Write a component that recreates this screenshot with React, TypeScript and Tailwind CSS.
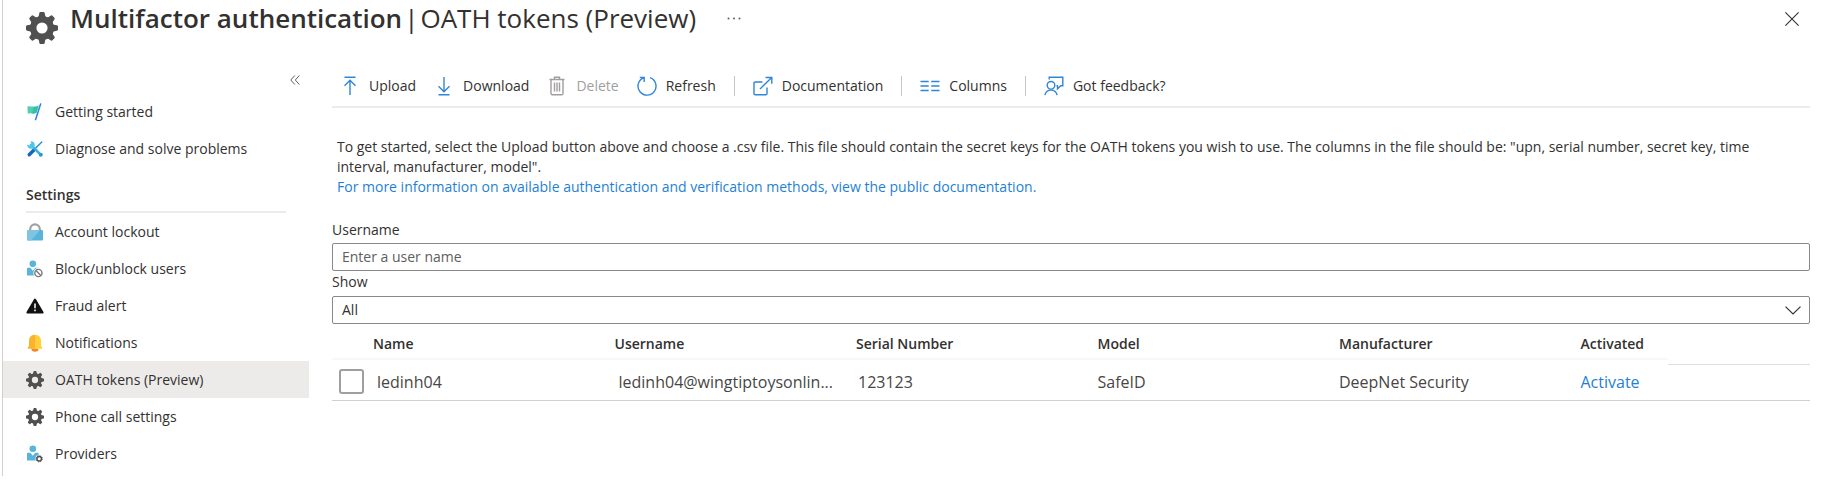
import type { ReactNode } from 'react';

const TOOTH_ANGLES = [0, 45, 90, 135, 180, 225, 270, 315];

function Gear({ className }: { className: string }) {
  return (
    <svg viewBox="0 0 32 32" className={className} aria-hidden="true">
      <circle cx="16" cy="16" r="8.8" fill="none" stroke="#505050" strokeWidth="6.4" />
      {TOOTH_ANGLES.map((angle) => (
        <path
          key={angle}
          d="M11.2 6.2 Q13 5 13.3 1.2 Q13.4 0 14.4 0 H17.6 Q18.6 0 18.7 1.2 Q19 5 20.8 6.2 V8 H11.2Z"
          fill="#505050"
          transform={`rotate(${angle} 16 16)`}
        />
      ))}
    </svg>
  );
}

function FlagIcon() {
  return (
    <svg viewBox="0 0 18 18" className="size-[18px]" aria-hidden="true">
      <path d="M1.4 3.8C4 2.4 7 5 12.6 2.4L10.6 9.6C7 12.2 5 9 1.8 10.8Z" fill="#4fd0b5" />
      <path d="M7.5 4C9.5 4 11 3.4 12.6 2.4L10.6 9.6C8.8 10.8 7.4 10.6 6.2 10.3Z" fill="#35bfa5" />
      <path d="M14.6 .9L9.6 16.6" stroke="#2f7fe0" strokeWidth="1.5" strokeLinecap="round" />
    </svg>
  );
}

function ToolsIcon() {
  return (
    <svg viewBox="0 0 18 18" className="size-[18px]" aria-hidden="true">
      <path d="M15.8 2L9 8.8" stroke="#2a93b8" strokeWidth="1.5" strokeLinecap="round" />
      <path d="M8.2 9.8L3.2 14.8" stroke="#1565c0" strokeWidth="3.4" strokeLinecap="round" />
      <path d="M5 5L14.8 14.8" stroke="#32b4dc" strokeWidth="2.6" strokeLinecap="round" />
      <path d="M4.6 1.2A3.8 3.8 0 1 1 1.2 4.6L3.6 5.6L5.4 3.8Z" fill="#4cc6ea" />
      <circle cx="14.8" cy="14.8" r="2" fill="#2a9cc4" />
    </svg>
  );
}

function LockIcon() {
  return (
    <svg viewBox="0 0 18 18" className="size-[18px]" aria-hidden="true">
      <path d="M4.2 8V6.2A4.8 4.8 0 0 1 13.8 6.2V8" fill="none" stroke="#a0a1a2" strokeWidth="2.2" />
      <rect x="1" y="7" width="16" height="10.5" rx="1" fill="#59b4d9" />
      <path d="M2 7H14L5 17.5H2A1 1 0 0 1 1 16.5V8A1 1 0 0 1 2 7Z" fill="#7fc4e2" />
    </svg>
  );
}

function Person() {
  return (
    <>
      <circle cx="6.8" cy="3.8" r="3.3" fill="#59b4d9" />
      <path
        d="M1.8 7.8H4.4L6.8 10.8L9.2 7.8H11.8Q12.6 7.8 12.6 8.6V15.5H1V8.6Q1 7.8 1.8 7.8Z"
        fill="#59b4d9"
      />
    </>
  );
}

function BlockUserIcon() {
  return (
    <svg viewBox="0 0 18 18" className="size-[18px]" aria-hidden="true">
      <Person />
      <circle cx="12.4" cy="13" r="5" fill="#fff" />
      <circle cx="12.4" cy="13" r="3.6" fill="#fff" stroke="#7a7a7a" strokeWidth="1.4" />
      <path d="M10 10.6L14.8 15.4" stroke="#7a7a7a" strokeWidth="1.4" />
    </svg>
  );
}

function ProviderIcon() {
  return (
    <svg viewBox="0 0 18 18" className="size-[18px]" aria-hidden="true">
      <Person />
      <circle cx="13.2" cy="13.8" r="3.9" fill="#fff" />
      <circle cx="13.2" cy="13.8" r="2.3" fill="#fff" stroke="#505050" strokeWidth="1.5" />
      <circle
        cx="13.2"
        cy="13.8"
        r="3.1"
        fill="none"
        stroke="#505050"
        strokeWidth="1"
        strokeDasharray="1.2 1.235"
      />
    </svg>
  );
}

function WarningIcon() {
  return (
    <svg viewBox="0 0 18 18" className="size-[18px]" aria-hidden="true">
      <path d="M9 2.6L16.6 15.6H1.4Z" fill="#111" stroke="#111" strokeWidth="2" strokeLinejoin="round" />
      <path d="M9 6.5V11.2M9 12.6V14.2" stroke="#fff" strokeWidth="1.5" />
    </svg>
  );
}

function BellIcon() {
  return (
    <svg viewBox="0 0 18 18" className="size-[18px]" aria-hidden="true">
      <path d="M5.4 14.5H12.6A3.6 3.2 0 0 1 5.4 14.5Z" fill="#ee8a1d" />
      <path d="M9 .8C5 .8 3 3.6 3 7V12L1.6 13.6Q1.4 14.8 2.4 14.8H9Z" fill="#fbb22c" />
      <path d="M9 .8C13 .8 15 3.6 15 7V12L16.4 13.6Q16.6 14.8 15.6 14.8H9Z" fill="#ffd03b" />
    </svg>
  );
}

function ToolIcon({ children, muted }: { children: ReactNode; muted?: boolean }) {
  return (
    <svg
      viewBox="0 0 20 20"
      className={muted ? 'size-5 text-[#a19f9d]' : 'size-5 text-[#2f86d8]'}
      fill="none"
      stroke="currentColor"
      strokeWidth="1.4"
      aria-hidden="true"
    >
      {children}
    </svg>
  );
}

function ToolButton({ icon, label, disabled }: { icon: ReactNode; label: string; disabled?: boolean }) {
  return (
    <button
      type="button"
      disabled={disabled}
      className="flex items-center gap-[9px] whitespace-nowrap text-[#323130] disabled:text-[#a19f9d]"
    >
      {icon}
      {label}
    </button>
  );
}

function Divider() {
  return <span className="h-5 w-px bg-[#c8c6c4]" />;
}

const introLinks = [
  { label: 'Getting started', icon: <FlagIcon /> },
  { label: 'Diagnose and solve problems', icon: <ToolsIcon /> },
];

const settingsLinks = [
  { label: 'Account lockout', icon: <LockIcon /> },
  { label: 'Block/unblock users', icon: <BlockUserIcon /> },
  { label: 'Fraud alert', icon: <WarningIcon /> },
  { label: 'Notifications', icon: <BellIcon /> },
  { label: 'OATH tokens (Preview)', icon: <Gear className="size-[18px]" />, selected: true },
  { label: 'Phone call settings', icon: <Gear className="size-[18px]" /> },
  { label: 'Providers', icon: <ProviderIcon /> },
];

function NavLink({ label, icon, selected }: { label: string; icon: ReactNode; selected?: boolean }) {
  return (
    <li>
      <a
        href="#"
        aria-current={selected ? 'page' : undefined}
        className={
          selected
            ? 'flex h-[37px] items-center gap-[11px] bg-[#edebe9] pl-[23px]'
            : 'flex h-[37px] items-center gap-[11px] pl-[23px]'
        }
      >
        {icon}
        {label}
      </a>
    </li>
  );
}

const headings = ['Name', 'Username', 'Serial Number', 'Model', 'Manufacturer', 'Activated'];

export default function App() {
  return (
    <div className="bg-white pl-[2px] font-['Open_Sans','Noto_Sans',sans-serif] text-sm text-[#323130]">
      <div className="border-l border-[#d2d0ce] pb-1">
        <header className="flex h-[62px] items-start pr-[29px] pl-[23px]">
          <Gear className="mt-3 size-8" />
          <h1 className="ml-3 flex gap-[2px] text-[26px] leading-9 whitespace-nowrap">
            <span className="font-semibold">Multifactor authentication</span>
            <span>|</span>
            <span>OATH tokens (Preview)</span>
          </h1>
          <button type="button" aria-label="More" className="mt-[17px] ml-[31px]">
            <svg viewBox="0 0 14 3" className="h-[3px] w-[14px]" fill="#605e5c">
              <circle cx="1.5" cy="1.5" r="1" />
              <circle cx="7" cy="1.5" r="1" />
              <circle cx="12.5" cy="1.5" r="1" />
            </svg>
          </button>
          <button type="button" aria-label="Close" className="mt-3 ml-auto">
            <svg viewBox="0 0 14 14" className="size-[14px]" stroke="#323130" strokeWidth="1.1">
              <path d="M.4 .4L13.6 13.6M13.6 .4L.4 13.6" />
            </svg>
          </button>
        </header>

        <div className="flex">
          <nav aria-label="Sections" className="w-[306px] shrink-0">
            <div className="flex h-[31px] items-center justify-end pt-[5px] pr-[9px]">
              <button type="button" aria-label="Collapse menu">
                <svg viewBox="0 0 10 10" className="size-[10px]" fill="none" stroke="#605e5c">
                  <path d="M4.8 .5L.8 5L4.8 9.5M9.3 .5L5.3 5L9.3 9.5" />
                </svg>
              </button>
            </div>
            <ul>
              {introLinks.map((link) => (
                <NavLink key={link.label} {...link} />
              ))}
            </ul>
            <h2 className="mr-[23px] ml-[23px] flex h-[46px] items-end border-b-2 border-[#edebe9] pb-[6px] font-semibold">
              Settings
            </h2>
            <ul>
              {settingsLinks.map((link) => (
                <NavLink key={link.label} {...link} />
              ))}
            </ul>
          </nav>

          <main className="min-w-0 flex-1 pr-[18px] pl-[23px]">
            <div className="flex h-[46px] items-center gap-[18px] border-b-2 border-[#edebe9] pt-1 pl-2">
              <ToolButton
                label="Upload"
                icon={
                  <ToolIcon>
                    <path d="M4.5 1.2H15.5M10 19V4M4.5 9.7L10 4.2L15.5 9.7" />
                  </ToolIcon>
                }
              />
              <ToolButton
                label="Download"
                icon={
                  <ToolIcon>
                    <path d="M4.5 18.8H15.5M10 1V16M4.5 10.3L10 15.8L15.5 10.3" />
                  </ToolIcon>
                }
              />
              <ToolButton
                label="Delete"
                disabled
                icon={
                  <ToolIcon muted>
                    <path d="M2.5 3.5H17.5M7.5 3.5V1.2H12.5V3.5M4 3.5V17.5Q4 18.8 5.3 18.8H14.7Q16 18.8 16 17.5V3.5M7.5 6.5V15.5M10 6.5V15.5M12.5 6.5V15.5" />
                  </ToolIcon>
                }
              />
              <ToolButton
                label="Refresh"
                icon={
                  <ToolIcon>
                    <path d="M13 1.6A9 9 0 1 1 6.5 1.8M2.8 1.4H7.2V6" />
                  </ToolIcon>
                }
              />
              <Divider />
              <ToolButton
                label="Documentation"
                icon={
                  <ToolIcon>
                    <path d="M9.5 6H2.2Q1 6 1 7.2V17.5Q1 18.7 2.2 18.7H12.8Q14 18.7 14 17.5V11.5M7 13L18.5 1.7M12.5 1.5H18.8V7.8" />
                  </ToolIcon>
                }
              />
              <Divider />
              <ToolButton
                label="Columns"
                icon={
                  <ToolIcon>
                    <path d="M.5 5.5H8.7M11.2 5.5H19.5M.5 10H8.7M11.2 10H19.5M.5 14.5H8.7M11.2 14.5H19.5" />
                  </ToolIcon>
                }
              />
              <Divider />
              <ToolButton
                label="Got feedback?"
                icon={
                  <ToolIcon>
                    <circle cx="7" cy="9.3" r="3.8" />
                    <path d="M.9 19.2A6.2 6.2 0 0 1 13.1 19.2M5.2 3.5V1.2H18.8V9.7H16.8L13.5 12.8V9.7H12.5" />
                  </ToolIcon>
                }
              />
            </div>

            <p className="mt-[29px] pr-5 pl-[5px] leading-5">
              To get started, select the Upload button above and choose a .csv file. This file should contain the secret
              keys for the OATH tokens you wish to use. The columns in the file should be: "upn, serial number, secret
              key, time interval, manufacturer, model".
              <br />
              <a href="#" className="text-[#1f7fd6]">
                For more information on available authentication and verification methods, view the public
                documentation.
              </a>
            </p>

            <form className="mt-[21px] flex flex-col">
              <label htmlFor="username" className="h-[25px] leading-6">
                Username
              </label>
              <input
                id="username"
                type="text"
                placeholder="Enter a user name"
                className="h-7 rounded-[2px] border border-[#8a8886] px-[9px] pb-[2px] placeholder:text-[#605e5c]"
              />
              <label htmlFor="show" className="h-[25px] leading-[22px]">
                Show
              </label>
              <div className="relative flex">
                <select
                  id="show"
                  className="h-7 w-full appearance-none rounded-[2px] border border-[#8a8886] bg-white px-[9px]"
                >
                  <option>All</option>
                </select>
                <svg
                  viewBox="0 0 16 9"
                  className="pointer-events-none absolute top-[10px] right-[9px] h-[9px] w-4"
                  fill="none"
                  stroke="#323130"
                  strokeWidth="1.2"
                  aria-hidden="true"
                >
                  <path d="M.5 .6L8 8L15.5 .6" />
                </svg>
              </div>
            </form>

            <table className="w-full table-fixed border-collapse text-left">
              <colgroup>
                <col className="w-[41px]" />
                <col className="w-[16.34%]" />
                <col className="w-[16.34%]" />
                <col className="w-[16.34%]" />
                <col className="w-[16.34%]" />
                <col className="w-[16.34%]" />
                <col className="w-[87px]" />
                <col />
              </colgroup>
              <thead>
                <tr className="align-top">
                  <td className="p-0">
                    <div className="h-9 border-b-2 border-[#f8f8f8]" />
                  </td>
                  {headings.map((heading) => (
                    <th key={heading} scope="col" className="p-0 font-semibold">
                      <div className="flex h-9 items-center border-b-2 border-[#f8f8f8] pt-[6px]">{heading}</div>
                    </th>
                  ))}
                  <td className="h-10 border-b border-[#e1dfdd] p-0" />
                </tr>
              </thead>
              <tbody>
                <tr className="h-9 border-b border-[#d2d0ce] text-base whitespace-nowrap text-[#484644]">
                  <td className="p-0 pl-[7px]">
                    <input
                      type="checkbox"
                      aria-label="Select ledinh04"
                      className="block size-[25px] appearance-none rounded-[3px] border-2 border-[#a19f9d]"
                    />
                  </td>
                  <td className="p-0 pl-1">ledinh04</td>
                  <td className="p-0 pl-1">ledinh04@wingtiptoysonlin...</td>
                  <td className="p-0 pl-[2px]">123123</td>
                  <td className="p-0">SafeID</td>
                  <td className="p-0">DeepNet Security</td>
                  <td className="p-0">
                    <a href="#" className="text-[#1f7fd6]">
                      Activate
                    </a>
                  </td>
                  <td className="p-0" />
                </tr>
              </tbody>
            </table>
          </main>
        </div>
      </div>
    </div>
  );
}
